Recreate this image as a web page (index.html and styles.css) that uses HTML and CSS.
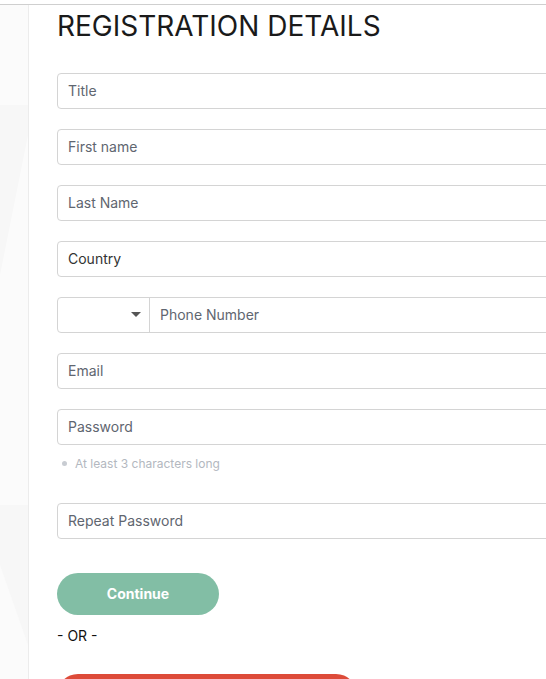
FILE: index.html
```html
<!DOCTYPE html>
<html lang="en">
<head>
<meta charset="utf-8">
<title>Registration Details</title>
<link rel="stylesheet" href="styles.css">
</head>
<body>
<div class="page">
  <aside class="side">
    <svg class="side-art" width="28" height="674" viewBox="0 0 28 674" preserveAspectRatio="none">
      <polygon points="0,100 28,100 28,130 0,270" fill="#f7f7f7"/>
      <polygon points="0,500 28,500 28,640 0,560" fill="#f7f7f7"/>
    </svg>
  </aside>
  <main class="main">
    <h1 class="title">REGISTRATION DETAILS</h1>
    <form class="form">
      <div class="field"><div class="input">Title</div></div>
      <div class="field"><div class="input">First name</div></div>
      <div class="field"><div class="input">Last Name</div></div>
      <div class="field"><div class="input input-dark">Country</div></div>
      <div class="field">
        <div class="input phone">
          <div class="phone-code"><span class="caret"></span></div>
          <div class="phone-num">Phone Number</div>
        </div>
      </div>
      <div class="field"><div class="input">Email</div></div>
      <div class="field field-tight"><div class="input">Password</div></div>
      <ul class="hints"><li>At least 3 characters long</li></ul>
      <div class="field"><div class="input">Repeat Password</div></div>
      <button type="button" class="btn-continue">Continue</button>
      <div class="or">- OR -</div>
      <button type="button" class="btn-google"></button>
    </form>
  </main>
</div>
</body>
</html>
```

FILE: styles.css
```css
html, body {
  margin: 0;
  padding: 0;
  background: #fff;
  overflow: hidden;
  height: 100%;
}
body {
  font-family: Inter, "Noto Sans", sans-serif;
  color: #1a1a1a;
}
.page {
  margin-top: 4px;
  border-top: 1px solid #cfcfcf;
  display: flex;
  height: calc(100% - 5px);
  overflow: hidden;
}
.side {
  width: 28px;
  flex: 0 0 28px;
  background: #fbfbfb;
  border-right: 1px solid #ececec;
  overflow: hidden;
}
.side-art {
  display: block;
}
.main {
  flex: 1;
  padding-left: 28px;
  min-width: 0;
  overflow: hidden;
}
.title {
  margin: 4px 0 0;
  font-size: 28px;
  font-weight: 400;
  line-height: 34px;
  color: #1a1a1a;
  white-space: nowrap;
}
.form {
  margin-top: 30px;
  width: 540px;
}
.field {
  margin-bottom: 20px;
}
.field-tight {
  margin-bottom: 10px;
}
.input {
  box-sizing: border-box;
  height: 36px;
  border: 1px solid #d4d4d4;
  border-radius: 4px;
  padding: 0 10px 2px;
  display: flex;
  align-items: center;
  font-size: 14px;
  color: #5f6670;
}
.input-dark {
  color: #333;
}
.phone {
  padding: 0;
}
.phone-code {
  width: 91px;
  height: 100%;
  border-right: 1px solid #d4d4d4;
  position: relative;
  flex: 0 0 auto;
}
.caret {
  position: absolute;
  left: 73px;
  top: 14px;
  width: 0;
  height: 0;
  border-left: 5px solid transparent;
  border-right: 5px solid transparent;
  border-top: 5px solid #555;
}
.phone-num {
  padding-left: 10px;
  padding-bottom: 2px;
}
.hints {
  margin: 0 0 30px;
  padding: 0 0 0 18px;
  list-style: none;
  font-size: 12px;
  line-height: 18px;
  color: #b3b8c0;
}
.hints li {
  position: relative;
}
.hints li::before {
  content: "";
  position: absolute;
  left: -13px;
  top: 6px;
  width: 5px;
  height: 5px;
  border-radius: 50%;
  background: #c8ccd2;
}
.btn-continue {
  display: block;
  margin-top: 34px;
  width: 162px;
  height: 42px;
  border: none;
  border-radius: 21px;
  background: #82bea5;
  color: #fff;
  font-family: Inter, "Noto Sans", sans-serif;
  font-size: 14px;
  font-weight: 700;
  padding: 0 0 2px;
}
.or {
  margin-top: 11px;
  font-size: 14px;
  line-height: 20px;
  color: #111;
}
.btn-google {
  display: block;
  margin-top: 28px;
  width: 300px;
  height: 42px;
  border: none;
  border-radius: 21px;
  background: #dd4b39;
  padding: 0;
}
```
